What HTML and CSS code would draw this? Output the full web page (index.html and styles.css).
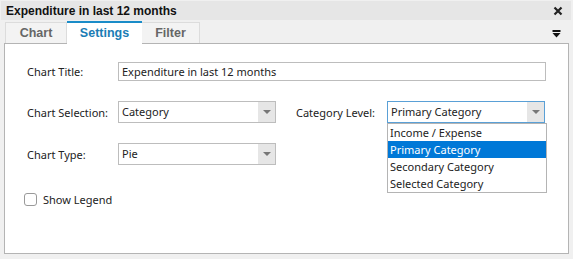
FILE: index.html
```html
<!DOCTYPE html>
<html lang="en">
<head>
    <meta charset="UTF-8">
    <title>Expenditure in last 12 months</title>
    <link rel="stylesheet" href="styles.css">
</head>
<body>
    <div class="window">
        <div class="titlebar">
            <span class="title">Expenditure in last 12 months</span>
            <svg class="close" width="10" height="10" viewBox="0 0 10 10">
                <path d="M1.5 1.5 L8.5 8.5 M8.5 1.5 L1.5 8.5" stroke="#222" stroke-width="2.2"/>
            </svg>
        </div>

        <div class="tabs">
            <div class="tab chart">Chart</div>
            <div class="tab active">Settings</div>
            <div class="tab filter">Filter</div>
            <svg class="menu" width="9" height="8" viewBox="0 0 9 8">
                <rect x="0.5" y="0" width="8" height="2" fill="#111"/>
                <path d="M0.5 3 L8.5 3 L4.5 7.5 Z" fill="#111"/>
            </svg>
        </div>

        <div class="panel">
            <div class="row">
                <label class="label">Chart Title:</label>
                <div class="input wide">Expenditure in last 12 months</div>
            </div>

            <div class="row">
                <label class="label">Chart Selection:</label>
                <div class="select">
                    <span class="value">Category</span>
                    <span class="arrow"></span>
                </div>
                <label class="label second">Category Level:</label>
                <div class="select-wrap">
                    <div class="select focused">
                        <span class="value">Primary Category</span>
                        <span class="arrow"></span>
                    </div>
                    <ul class="dropdown">
                        <li>Income / Expense</li>
                        <li class="selected">Primary Category</li>
                        <li>Secondary Category</li>
                        <li>Selected Category</li>
                    </ul>
                </div>
            </div>

            <div class="row">
                <label class="label">Chart Type:</label>
                <div class="select">
                    <span class="value">Pie</span>
                    <span class="arrow"></span>
                </div>
            </div>

            <div class="check-row">
                <span class="checkbox"></span>
                <span>Show Legend</span>
            </div>
        </div>
    </div>
</body>
</html>
```

FILE: styles.css
```css
html, body {
    margin: 0;
    padding: 0;
}
body {
    width: 573px;
    height: 259px;
    background: #f0f0f0;
    font-family: "Noto Sans", "Open Sans", sans-serif;
    font-size: 11px;
    color: #222;
    overflow: hidden;
}
.window {
    display: flex;
    flex-direction: column;
    height: 259px;
}
.titlebar {
    display: flex;
    justify-content: space-between;
    align-items: center;
    height: 19px;
    margin: 1px 2px 0 1px;
    padding: 0 8px 0 5px;
    background: #e6e6e6;
}
.title {
    font-family: "Liberation Sans", Arial, sans-serif;
    font-weight: bold;
    font-size: 12px;
    color: #111;
}
.close {
    margin-top: 1px;
}
.tabs {
    display: flex;
    align-items: flex-end;
    height: 23px;
    padding-left: 5px;
    position: relative;
}
.tab {
    font-family: "Liberation Sans", Arial, sans-serif;
    font-weight: bold;
    font-size: 12.5px;
    color: #666;
    height: 21px;
    line-height: 21px;
    text-align: center;
    background: #f3f3f3;
    border: 1px solid #dcdcdc;
    border-bottom: none;
    margin-bottom: -1px;
}
.tab.chart {
    width: 60px;
}
.tab.active {
    width: 75px;
    background: #fff;
    color: #1a7db5;
    border-top: 2px solid #1a8cc8;
    border-left: none;
    border-right: none;
    position: relative;
    z-index: 1;
}
.tab.filter {
    width: 57px;
    border-left: none;
}
.menu {
    position: absolute;
    right: 12px;
    top: 10px;
}
.panel {
    position: relative;
    flex: 1;
    margin: 0 4px 5px 4px;
    padding: 18px 22px 0 22px;
    background: #fff;
    border: 1px solid #b4b4b4;
}
.row {
    display: flex;
    align-items: center;
    margin-bottom: 20px;
}
.label {
    width: 91px;
    flex: none;
}
.label.second {
    width: 91px;
    margin-left: 20px;
}
.input {
    height: 17px;
    line-height: 17px;
    border: 1px solid #bdbdbd;
    padding: 0 3px;
}
.input.wide {
    width: 422px;
}
.select {
    display: flex;
    align-items: stretch;
    width: 156px;
    height: 20px;
    border: 1px solid #bdbdbd;
    background: #fff;
}
.select .value {
    flex: 1;
    line-height: 20px;
    padding-left: 3px;
}
.select .arrow {
    width: 17px;
    background: #e6e6e6;
    position: relative;
}
.select .arrow::after {
    content: "";
    position: absolute;
    left: 5px;
    top: 8px;
    border-left: 4px solid transparent;
    border-right: 4px solid transparent;
    border-top: 4px solid #777;
}
.select.focused {
    border-color: #5aa0d6;
}
.select-wrap {
    position: relative;
}
.dropdown {
    position: absolute;
    left: 0;
    top: 22px;
    width: 158px;
    margin: 0;
    padding: 0;
    list-style: none;
    background: #fff;
    border: 1px solid #b4b4b4;
    z-index: 2;
}
.dropdown li {
    height: 17px;
    line-height: 17px;
    padding-left: 2px;
}
.dropdown li.selected {
    background: #0078d7;
    color: #fff;
}
.check-row {
    display: flex;
    align-items: center;
    margin-left: -3px;
    margin-top: 27px;
}
.checkbox {
    width: 11px;
    height: 11px;
    border: 1px solid #9a9a9a;
    border-radius: 3px;
    margin-right: 6px;
}
```
